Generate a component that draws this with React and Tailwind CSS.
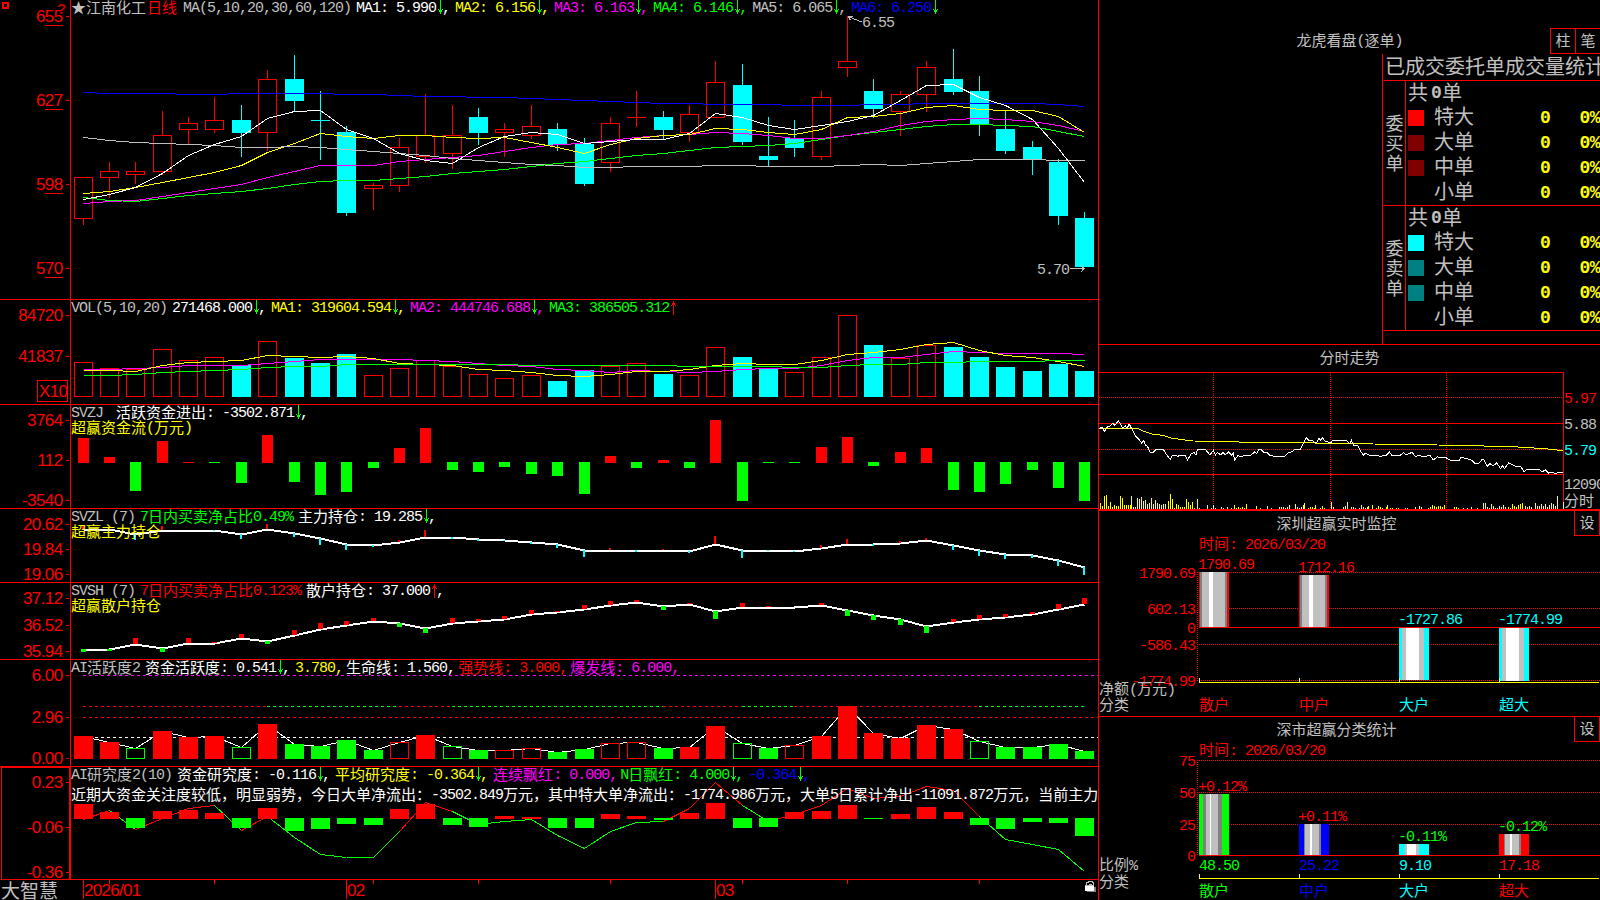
import { clsx } from "clsx";

const RED = "#ff0000";
const GREEN = "#00ff00";
const CYAN = "#00ffff";
const YELLOW = "#ffff00";
const MAGENTA = "#ff00ff";
const BLUE = "#0000ff";
const WHITE = "#ffffff";
const GRAY = "#c0c0c0";
const DIM = "#808080";

const MONO = "'Liberation Mono', 'Noto Sans CJK SC', monospace";
const SANS = "'Liberation Sans', sans-serif";
const HAN = "'Noto Sans CJK SC', sans-serif";

// Sample heights are stored in thirds of a pixel, measured from the origin of a panel group
const yAt = (origin, v) => origin + Math.floor(v / 3);
const cx = (i) => Math.floor(74.18 + 26.36 * i) + 9;

// color, wick top, body top, body bottom, wick bottom
const candles = [
  ["r", 532, 532, 656, 675], ["r", 486, 514, 532, 594], ["r", 486, 514, 523, 552],
  ["r", 333, 406, 514, 525], ["r", 351, 370, 388, 433], ["r", 291, 361, 388, 399],
  ["c", 315, 360, 399, 471], ["r", 210, 238, 397, 453], ["c", 165, 237, 303, 333],
  ["c", 273, 360, 362, 480], ["c", 378, 396, 639, 648], ["r", 549, 556, 566, 630],
  ["r", 414, 442, 556, 576], ["r", 282, 406, 469, 489], ["r", 315, 406, 460, 507],
  ["c", 324, 351, 399, 435], ["r", 369, 388, 397, 471], ["r", 315, 379, 406, 417],
  ["c", 369, 387, 435, 453], ["c", 414, 432, 552, 558], ["r", 351, 370, 487, 516],
  ["r", 273, 352, 352, 381], ["c", 333, 351, 390, 417], ["r", 315, 343, 397, 426],
  ["r", 183, 247, 352, 354], ["c", 192, 255, 426, 435], ["c", 351, 468, 480, 498],
  ["c", 360, 414, 444, 471], ["r", 273, 292, 469, 480], ["r", 50, 184, 202, 231],
  ["c", 237, 273, 327, 354], ["r", 273, 283, 334, 408], ["r", 183, 202, 283, 336],
  ["c", 147, 237, 276, 285], ["c", 228, 273, 374, 408], ["c", 333, 387, 453, 462],
  ["c", 423, 441, 478, 525], ["c", 477, 486, 648, 675], ["c", 636, 654, 801, 801],
];

const priceLines = [
  [BLUE, [277, 281, 281, 281, 283, 283, 281, 281, 281, 281, 284, 284, 287, 290, 290, 293, 293, 295, 297, 302, 304, 308, 310, 311, 314, 314, 314, 317, 317, 317, 314, 313, 311, 310, 311, 311, 311, 314, 319]],
  [GREEN, [592, 602, 604, 596, 586, 580, 574, 565, 553, 544, 541, 541, 535, 529, 520, 514, 507, 499, 491, 484, 475, 466, 460, 451, 442, 439, 436, 430, 418, 405, 397, 388, 379, 373, 374, 376, 380, 394, 408]],
  [MAGENTA, [610, 604, 601, 590, 577, 565, 552, 531, 514, 496, 496, 496, 484, 478, 472, 466, 454, 442, 434, 430, 421, 412, 406, 403, 397, 400, 406, 415, 415, 407, 394, 376, 364, 358, 355, 358, 365, 376, 394]],
  [YELLOW, [580, 573, 561, 547, 532, 517, 496, 456, 429, 401, 410, 415, 407, 406, 411, 415, 412, 428, 442, 460, 432, 414, 407, 402, 385, 388, 397, 403, 388, 352, 349, 341, 323, 316, 327, 331, 331, 350, 397]],
  [GRAY, [412, 422, 427, 430, 433, 437, 442, 442, 438, 442, 449, 455, 461, 467, 476, 481, 487, 493, 497, 502, 502, 500, 500, 499, 497, 497, 499, 499, 499, 496, 493, 496, 490, 484, 479, 479, 478, 482, 482]],
  [WHITE, [598, 584, 563, 520, 466, 433, 409, 354, 335, 331, 388, 416, 460, 482, 490, 442, 410, 398, 402, 430, 424, 418, 418, 400, 340, 352, 376, 388, 376, 364, 345, 302, 257, 253, 293, 316, 357, 446, 547]],
];

const volumes = [217, 235, 238, 178, 211, 202, 227, 154, 204, 219, 192, 256, 235, 211, 229, 253, 265, 256, 273, 242, 229, 220, 252, 256, 172, 201, 236, 247, 202, 76, 165, 205, 166, 171, 201, 231, 243, 222, 243];
const volumeCyan = [6, 8, 9, 10, 18, 19, 22, 25, 26, 30, 33, 34, 35, 36, 37, 38];

const volumeLines = [
  [MAGENTA, [238, 238, 235, 233, 227, 225, 225, 219, 213, 208, 208, 208, 208, 211, 214, 219, 225, 230, 238, 241, 247, 241, 244, 247, 244, 239, 235, 235, 226, 211, 203, 202, 193, 184, 187, 190, 190, 190, 193]],
  [YELLOW, [241, 241, 244, 226, 218, 213, 211, 196, 199, 201, 199, 205, 221, 223, 226, 237, 240, 247, 255, 259, 252, 244, 243, 239, 226, 220, 223, 223, 211, 193, 187, 179, 164, 157, 181, 196, 203, 214, 229]],
  [GREEN, [256, 256, 253, 247, 244, 240, 238, 233, 229, 228, 223, 223, 223, 223, 223, 223, 223, 226, 226, 226, 226, 226, 226, 229, 229, 229, 229, 232, 232, 226, 223, 223, 217, 217, 214, 214, 214, 211, 211]],
];

const fundFlow = [444, 501, 603, 453, 516, 519, 579, 435, 576, 615, 606, 534, 474, 414, 540, 546, 531, 552, 558, 612, 498, 534, 510, 534, 390, 633, 519, 519, 471, 441, 528, 486, 474, 600, 606, 582, 540, 594, 633];

const mainHold = [717, 717, 733, 721, 720, 720, 733, 718, 731, 745, 764, 766, 758, 741, 743, 749, 752, 758, 763, 780, 780, 780, 782, 783, 764, 780, 781, 783, 776, 763, 762, 761, 751, 766, 781, 794, 796, 811, 831];
const mainTicks = [705, 712, 750, 708, 720, 723, 747, 702, 741, 765, 780, 771, 750, 720, 749, 755, 755, 764, 774, 801, 774, 786, 777, 789, 738, 804, 784, 786, 765, 747, 768, 753, 744, 780, 798, 807, 804, 828, 855];

const retailHold = [207, 207, 193, 205, 189, 189, 176, 184, 166, 149, 136, 125, 130, 145, 130, 125, 119, 103, 98, 88, 76, 68, 79, 73, 94, 81, 81, 81, 77, 91, 106, 118, 138, 128, 118, 113, 103, 88, 74];
const retailTicks = [216, 213, 174, 216, 174, 188, 162, 192, 150, 129, 123, 114, 141, 159, 114, 117, 108, 90, 94, 75, 63, 60, 90, 69, 117, 69, 80, 81, 69, 108, 120, 135, 159, 117, 105, 102, 96, 72, 54];

// lower case letter = hollow bar
const activity = [
  ["R", 468], ["R", 486], ["g", 505], ["R", 453], ["R", 472], ["R", 468], ["g", 502], ["R", 432], ["G", 492], ["G", 498],
  ["G", 480], ["G", 510], ["r", 487], ["R", 465], ["g", 499], ["G", 510], ["r", 511], ["r", 505], ["G", 516], ["G", 507],
  ["r", 490], ["r", 487], ["G", 504], ["R", 501], ["R", 438], ["g", 490], ["G", 504], ["r", 496], ["R", 468], ["R", 378],
  ["R", 459], ["R", 474], ["R", 435], ["R", 447], ["g", 484], ["G", 501], ["G", 501], ["G", 492], ["G", 513],
];
const strengthRuns = [[0, 7, RED], [7, 12, GREEN], [12, 14, RED], [14, 22, GREEN], [22, 25, RED], [25, 27, GREEN], [27, 34, RED], [34, 38, GREEN]];

const research = [672, 696, 744, 693, 690, 699, 744, 684, 753, 747, 732, 735, 687, 672, 735, 741, 708, 711, 744, 744, 702, 708, 720, 699, 669, 744, 741, 696, 693, 675, 717, 702, 681, 696, 735, 747, 726, 729, 768];
const researchLine = [718, 691, 748, 715, 685, 676, 750, 710, 772, 823, 832, 832, 755, 667, 693, 732, 724, 718, 766, 806, 755, 728, 724, 684, 607, 676, 724, 703, 676, 625, 656, 648, 618, 632, 708, 778, 793, 808, 875];
const researchGreen = [1, 5, 7, 8, 9, 10, 11, 14, 15, 16, 17, 18, 19, 20, 21, 25, 34, 35, 36, 37];

const intradayPrice = "27,268 36,262 43,276 52,262 60,259 68,251 74,257 85,244 92,253 98,265 106,259 112,266 117,252 124,265 136,288 148,301 155,310 161,303 166,316 173,321 180,337 190,337 198,329 220,329 228,343 241,360 247,347 256,346 263,351 270,346 284,346 293,361 304,341 313,339 318,347 322,329 346,329 360,346 370,332 376,346 382,338 393,346 399,337 405,346 416,337 424,346 430,340 434,361 444,347 454,352 463,347 483,346 494,337 500,341 506,330 512,329 520,337 530,337 538,346 556,351 582,352 594,340 606,336 616,328 632,328 640,310 649,295 656,301 667,301 673,309 680,309 686,296 692,301 698,295 706,306 714,307 721,311 729,301 768,301 780,312 784,301 790,316 804,319 811,334 820,346 826,340 838,346 862,346 872,351 880,346 890,346 898,337 905,346 932,346 940,339 948,346 966,338 977,351 985,346 1000,351 1020,347 1030,361 1042,352 1066,353 1080,361 1108,361 1113,353 1122,355 1144,361 1155,371 1168,370 1176,360 1182,361 1192,380 1200,372 1210,378 1220,370 1232,387 1238,378 1243,387 1256,370 1274,379 1292,380 1302,397 1310,388 1346,388 1356,397 1366,390 1376,400 1386,398 1396,402 1408,398 1420,397";
const intradayAvg = "27,268 80,267 82,265 140,265 160,274 190,284 218,287 242,295 270,299 310,304 395,305 500,309 845,311 848,313 1035,314 1040,316 1178,317 1180,319 1254,320 1316,324 1366,327 1400,331 1420,332";
const intradayVolume = [
  [31, 19], [37, 10], [43, 40], [49, 43], [55, 10], [61, 22], [67, 7], [73, 13], [79, 10], [85, 10], [91, 40], [97, 34], [103, 13], [109, 13], [115, 13], [121, 13], [124, 40], [130, 7], [136, 7],
  [142, 34], [148, 31], [154, 37], [160, 25], [166, 28], [172, 16], [178, 19], [184, 34], [190, 16], [196, 28], [202, 19], [208, 16], [214, 13], [220, 16], [226, 16], [235, 25], [241, 46], [247, 31],
  [253, 4], [259, 16], [265, 13], [271, 7], [277, 7], [283, 7], [289, 31], [295, 22], [301, 13], [307, 22], [313, 4], [322, 31], [328, 4], [352, 13], [364, 4], [370, 13], [376, 4], [394, 7], [400, 4],
  [412, 7], [424, 4], [433, 13], [439, 4], [445, 7], [451, 4], [457, 7], [463, 4], [469, 16], [499, 10], [511, 4], [532, 10], [544, 4], [568, 7], [574, 7], [580, 7], [586, 4], [592, 7], [598, 13],
  [616, 16], [622, 7], [628, 4], [634, 7], [640, 13], [643, 19], [655, 4], [661, 7], [667, 7], [673, 4], [676, 13], [691, 4], [697, 10], [703, 4], [724, 22], [730, 7], [760, 7], [766, 10], [772, 22],
  [784, 7], [790, 7], [796, 4], [808, 4], [814, 13], [820, 7], [826, 4], [832, 7], [835, 10], [847, 13], [859, 4], [865, 10], [871, 7], [877, 4], [889, 7], [892, 13], [901, 4], [907, 4], [919, 4], [925, 4],
  [946, 4], [952, 4], [976, 7], [988, 10], [994, 7], [1015, 4], [1021, 7], [1027, 13], [1033, 10], [1039, 7], [1045, 10], [1051, 10], [1057, 7], [1063, 13], [1093, 7], [1099, 7], [1105, 4], [1120, 4],
  [1132, 4], [1144, 7], [1162, 4], [1180, 19], [1186, 19], [1192, 7], [1198, 4], [1204, 16], [1210, 10], [1216, 4], [1222, 4], [1228, 10], [1234, 7], [1240, 13], [1246, 7], [1255, 7], [1261, 4], [1267, 16],
  [1273, 10], [1279, 7], [1285, 13], [1291, 16], [1297, 19], [1306, 10], [1312, 7], [1318, 10], [1324, 7], [1336, 19], [1342, 10], [1348, 10], [1354, 16], [1360, 10], [1366, 16], [1372, 7], [1378, 13],
  [1384, 19], [1390, 16], [1396, 10], [1402, 40],
];

const isHan = (s) => /[\u2600-\uffff]/.test(s);
const splitRuns = (s) => s.match(/[\u2600-\uffff]+|[^\u2600-\uffff]+/g) ?? [];

// Han characters sit on a 15px cell, everything else on an 8px one
const Mixed = ({ children }) =>
  splitRuns(children).map((run, i) => (
    <span
      key={i}
      className={clsx(
        "whitespace-pre text-[15px] leading-4",
        isHan(run)
          ? "-mt-px mb-px font-['Noto_Sans_CJK_SC',sans-serif]"
          : "mt-px -mb-px font-['Liberation_Mono',monospace] tracking-[-1px]"
      )}
    >
      {run}
    </span>
  ));

const Label = ({ x, y, fill, anchor = "start", children }) => (
  <text x={x} y={y + 5} fill={fill} textAnchor={anchor} fontSize="15" xmlSpace="preserve">
    {splitRuns(children).map((run, i) => (
      <tspan key={i} fontFamily={isHan(run) ? HAN : MONO} letterSpacing={isHan(run) ? 0 : -1}>
        {run}
      </tspan>
    ))}
  </text>
);

const Arrow = ({ up }) => (
  <svg className="block h-4 w-2 shrink-0" viewBox="0 0 8 16" shapeRendering="crispEdges">
    {up ? (
      <path d="M4 1h1v14h-1zM3 3h3v2h-3zM2 5h1v1h-1zM6 5h1v1h-1z" fill={RED} />
    ) : (
      <path d="M4 0h1v14h-1zM3 10h3v2h-3zM2 9h1v1h-1zM6 9h1v1h-1z" fill={GREEN} />
    )}
  </svg>
);

const Legend = ({ items, note }) => (
  <div className="absolute top-0 left-[71px]">
    <div className="flex h-4 items-center gap-[3px] leading-4 whitespace-nowrap">
      {items.map(([color, text, dir], i) => (
        <div
          key={i}
          className={clsx("flex items-center", !dir && !text.endsWith(",") && "pr-0.5", color)}
        >
          <Mixed>{text}</Mixed>
          {dir && <Arrow up={dir === "up"} />}
          {dir && (
            <span className="mt-px -mb-px -ml-0.5 w-2.5 font-['Liberation_Mono',monospace] text-[15px] leading-4">
              {dir === "end" ? "" : ","}
            </span>
          )}
        </div>
      ))}
    </div>
    {note}
  </div>
);

const SubTitle = ({ children }) => (
  <div className="-mt-px flex h-4 items-center leading-4 whitespace-nowrap text-[#ffff00]">
    <Mixed>{children}</Mixed>
  </div>
);

const Line = ({ values, origin, color, width = 1 }) => (
  <polyline
    points={values.map((v, i) => `${cx(i) + 0.5},${yAt(origin, v) + 0.5}`).join(" ")}
    fill="none"
    stroke={color}
    strokeWidth={width}
  />
);

const Bar = ({ i, top, bottom, color, hollow, width = 19 }) => {
  const x = cx(i) - Math.floor(width / 2);
  return hollow ? (
    <rect x={x + 0.5} y={top + 0.5} width={width - 1} height={Math.max(bottom - top - 1, 0.01)} fill="none" stroke={color} />
  ) : (
    <rect x={x} y={top} width={width} height={Math.max(bottom - top, 1)} fill={color} />
  );
};

const Axis = ({ top, bottom, ticks, underline }) => (
  <g>
    <rect x={70} y={top} width={1} height={bottom - top} fill={RED} />
    {ticks.map(([label, y]) => (
      <g key={label}>
        <rect x={66} y={y} width={3} height={1} fill={RED} />
        <text x={62.5} y={y + 6} textAnchor="end" fill={RED} fontFamily={SANS} fontSize="17" letterSpacing="-0.6">
          {label}
        </text>
        {underline && <rect x={45} y={y + 9} width={18} height={1} fill={RED} />}
      </g>
    ))}
  </g>
);

const Panel = ({ className, top, height, children, legend }) => (
  <section className={clsx("relative shrink-0 border-[#ff0000]", className)}>
    <svg className="block" width="1098" height={height} viewBox={`0 ${top} 1098 ${height}`} shapeRendering="crispEdges">
      {children}
    </svg>
    {legend}
  </section>
);

const PricePanel = () => (
  <Panel
    className="h-[299px]"
    top={0}
    height={299}
    legend={
      <Legend
        items={[
          ["text-[#c0c0c0] w-3", "★"],
          ["text-[#c0c0c0] -mr-1", "江南化工"],
          ["text-[#ff0000] pr-[3px]", "日线"],
          ["text-[#c0c0c0]", "MA(5,10,20,30,60,120)"],
          ["text-white", "MA1: 5.990", "down"],
          ["text-[#ffff00]", "MA2: 6.156", "down"],
          ["text-[#ff00ff]", "MA3: 6.163", "down"],
          ["text-[#00ff00]", "MA4: 6.146", "down"],
          ["text-[#c0c0c0]", "MA5: 6.065", "down"],
          ["text-[#0000ff]", "MA6: 6.250", "end"],
        ]}
      />
    }
  >
    <Axis top={0} bottom={299} underline ticks={[["655", 16], ["627", 100], ["598", 184], ["570", 268]]} />
    <rect x={3} y={3} width={5} height={5} fill="none" stroke={RED} strokeWidth={2} />
    <text x={57} y={14} fill="#c00000" fontFamily={SANS} fontWeight="bold" fontSize="15">?</text>
    {candles.map(([kind, high, top, bottom, low], i) => {
      const color = kind === "r" ? RED : CYAN;
      const [h, t, b, l] = [high, top, bottom, low].map((v) => yAt(0, v));
      return (
        <g key={i} fill={color}>
          <rect x={cx(i)} y={h} width={1} height={t - h} />
          <rect x={cx(i)} y={b} width={1} height={Math.max(l - b, 0)} />
          {kind === "r" && b > t ? (
            <Bar i={i} top={t} bottom={b + 1} color={color} hollow />
          ) : (
            <Bar i={i} top={t} bottom={b} color={color} />
          )}
        </g>
      );
    })}
    {priceLines.map(([color, values]) => (
      <Line key={color} values={values} origin={0} color={color} />
    ))}
    <path d="M862 22l-13-5M848.500 16.500h4M848.500 16.500l2 4" stroke={GRAY} fill="none" />
    <Label x={862} y={22} fill={GRAY}>6.55</Label>
    <path d="M1070 268.500h14M1080 265l4 3.500l-3 3.500" stroke={GRAY} fill="none" />
    <Label x={1037} y={269} fill={GRAY}>5.70</Label>
  </Panel>
);

const VolumePanel = () => (
  <Panel
    className="h-[105px] border-t"
    top={300}
    height={104}
    legend={
      <Legend
        items={[
          ["text-[#c0c0c0]", "VOL(5,10,20)"],
          ["text-white", "271468.000", "down"],
          ["text-[#ffff00]", "MA1: 319604.594", "down"],
          ["text-[#ff00ff]", "MA2: 444746.688", "down"],
          ["text-[#00ff00] [&>span:last-child]:invisible", "MA3: 386505.312", "up"],
        ]}
      />
    }
  >
    <Axis top={300} bottom={404} ticks={[["84720", 315], ["41837", 356]]} />
    <rect x={37.5} y={380.5} width={30} height={21} fill="none" stroke={RED} />
    <text x={39} y={397} fill={RED} fontFamily={SANS} fontSize="17" letterSpacing="-0.6">X10</text>
    {volumes.map((v, i) => {
      const cyan = volumeCyan.includes(i);
      return <Bar key={i} i={i} top={yAt(290, v)} bottom={397} color={cyan ? CYAN : RED} hollow={!cyan} />;
    })}
    {volumeLines.map(([color, values]) => (
      <Line key={color} values={values} origin={290} color={color} />
    ))}
  </Panel>
);

const FlowPanel = () => (
  <Panel
    className="h-[104px] border-t"
    top={405}
    height={103}
    legend={
      <Legend
        items={[
          ["text-[#c0c0c0]", "SVZJ "],
          ["text-white", "活跃资金进出: -3502.871", "down"],
        ]}
        note={<SubTitle>超赢资金流(万元)</SubTitle>}
      />
    }
  >
    <Axis top={405} bottom={508} ticks={[["3764", 420], ["112", 460], ["-3540", 500]]} />
    {fundFlow.map((v, i) =>
      v <= 516 ? (
        <Bar key={i} i={i} top={yAt(290, v)} bottom={463} color={RED} width={11} />
      ) : (
        <Bar key={i} i={i} top={462} bottom={yAt(290, v)} color={GREEN} width={11} />
      )
    )}
  </Panel>
);

const HoldPanel = ({ className, top, height, origin, ticks, line, marks, markWidth, downColor, legend }) => (
  <Panel className={className} top={top} height={height} legend={legend}>
    <Axis top={top} bottom={top + height} ticks={ticks} />
    <Line values={line} origin={origin} color={WHITE} width={2} />
    {marks.map((v, i) => {
      const a = yAt(origin, v);
      const b = yAt(origin, line[i]);
      return (
        <rect
          key={i}
          x={cx(i) - Math.floor(markWidth / 2)}
          y={Math.min(a, b)}
          width={markWidth}
          height={Math.abs(a - b)}
          fill={a < b ? RED : downColor}
        />
      );
    })}
  </Panel>
);

const ActivityPanel = () => (
  <Panel
    className="h-[107px] border-t"
    top={660}
    height={106}
    legend={
      <Legend
        items={[
          ["text-[#c0c0c0]", "AI活跃度2"],
          ["text-white", "资金活跃度: 0.541", "down"],
          ["text-[#ffff00]", "3.780,"],
          ["text-white", "生命线: 1.560,"],
          ["text-[#ff0000]", "强势线: 3.000,"],
          ["text-[#ff00ff]", "爆发线: 6.000,"],
        ]}
      />
    }
  >
    <Axis top={660} bottom={766} ticks={[["6.00", 675], ["2.96", 717], ["0.00", 758]]} />
    <g strokeDasharray="3 3">
      <path d="M83 675.500H1098" stroke={MAGENTA} />
      {strengthRuns.map(([from, to, color]) => (
        <path key={from} d={`M${cx(from)} 706.500H${cx(to)}`} stroke={color} />
      ))}
      <path d="M83 717.500H1098" stroke={RED} />
      <path d="M83 737.500H1098" stroke={WHITE} />
    </g>
    <Line values={activity.map(([, v]) => v)} origin={580} color={WHITE} />
    {activity.map(([kind, v], i) => (
      <Bar
        key={i}
        i={i}
        top={yAt(580, v)}
        bottom={759}
        color={kind.toLowerCase() === "r" ? RED : GREEN}
        hollow={kind === kind.toLowerCase()}
      />
    ))}
  </Panel>
);

const ResearchPanel = () => (
  <Panel
    className="h-[114px] border-t"
    top={767}
    height={113}
    legend={
      <Legend
        items={[
          ["text-[#c0c0c0]", "AI研究度2(10)"],
          ["text-white", "资金研究度: -0.116", "down"],
          ["text-[#ffff00]", "平均研究度: -0.364", "down"],
          ["text-[#ff00ff]", "连续飘红: 0.000,"],
          ["text-[#00ff00]", "N日飘红: 4.000", "down"],
          ["text-[#0000ff]", "-0.364", "down"],
        ]}
        note={
          <div className="mt-1 flex h-4 items-center leading-4 whitespace-nowrap text-white">
            <Mixed>
              近期大资金关注度较低，明显弱势，今日大单净流出：-3502.849万元，其中特大单净流出：-1774.986万元，大单5日累计净出-11091.872万元，当前主力
            </Mixed>
          </div>
        }
      />
    }
  >
    <Axis top={767} bottom={880} ticks={[["0.23", 782], ["-0.06", 827], ["-0.36", 872]]} />
    <rect x={1.5} y={767.5} width={68} height={112} fill="none" stroke={RED} />
    {researchLine.slice(1).map((v, i) => (
      <line
        key={i}
        x1={cx(i) + 0.5}
        y1={yAt(580, researchLine[i]) + 0.5}
        x2={cx(i + 1) + 0.5}
        y2={yAt(580, v) + 0.5}
        stroke={researchGreen.includes(i) ? GREEN : RED}
      />
    ))}
    {research.map((v, i) =>
      v < 714 ? (
        <Bar key={i} i={i} top={yAt(580, v)} bottom={819} color={RED} />
      ) : (
        <Bar key={i} i={i} top={818} bottom={yAt(580, v)} color={GREEN} />
      )
    )}
  </Panel>
);

const DateBar = () => (
  <footer className="flex h-[19px] items-center">
    <div className="w-[70px] shrink-0 pl-px font-['Noto_Sans_CJK_SC',sans-serif] text-[19px] leading-[17px] text-[#c0c0c0]">
      大智慧
    </div>
    <svg className="block overflow-visible" width="1028" height="19" viewBox="70 881 1028 19" shapeRendering="crispEdges">
      <rect x={70} y={880} width={1028} height={1} fill={RED} />
      {[["2026/01", 83], ["02", 346], ["03", 715]].map(([label, x]) => (
        <g key={label} fill={RED}>
          <rect x={x} y={881} width={1} height={19} />
          <text x={x + 1} y={897} fontFamily={SANS} fontSize="17" letterSpacing="-0.7">{label}</text>
        </g>
      ))}
      {[109, 214, 373, 478, 610, 742, 847, 979].map((x) => (
        <rect key={x} x={x} y={881} width={1} height={4} fill={RED} />
      ))}
      <path d="M1086.500 886v-2.500h1.500v-1h4v1h1.500v2.500M1088.500 885.500h3" fill="none" stroke={GRAY} />
      <rect x={1087} y={888} width={9} height={5} fill={DIM} />
      <rect x={1085} y={886} width={9} height={6} fill={WHITE} />
      <rect x={1085} y={886} width={9} height={1} fill={GRAY} />
    </svg>
  </footer>
);

const OrderBlock = ({ title, colors }) => (
  <div className="ml-px flex h-[125px] border-t border-[#ff0000]">
    <div className="flex w-[22px] shrink-0 flex-col items-center justify-center border-r border-[#ff0000] pb-[3px] font-['Noto_Sans_CJK_SC',sans-serif] text-[18px] leading-5">
      {title.split("").map((c) => (
        <span key={c}>{c}</span>
      ))}
    </div>
    <div className="flex flex-1 flex-col font-['Noto_Sans_CJK_SC',sans-serif] text-[20px] leading-6">
      <div className="flex h-6 items-center pl-0.5">
        <span className="-mt-[3px]">共</span>
        <b className="mr-px ml-[3px] font-['Liberation_Mono',monospace] text-[18px] tracking-[-0.8px]">0</b>
        <span className="-mt-[3px]">单</span>
      </div>
      {["特大", "大单", "中单", "小单"].map((name, i) => (
        <div key={name} className="flex h-[25px] items-center pl-0.5">
          <span className={clsx("size-4", colors[i])} />
          <span className="-mt-[3px] ml-2.5 w-[53px]">{name}</span>
          <b className="w-[63px] text-right font-['Liberation_Mono',monospace] text-[18px] tracking-[-0.8px] text-[#ffff00]">0</b>
          <b className="flex-1 text-right font-['Liberation_Mono',monospace] text-[18px] tracking-[-0.5px] text-[#ffff00]">0%</b>
        </div>
      ))}
    </div>
  </div>
);

const OrderPanel = () => (
  <section className="flex h-[345px] shrink-0 flex-col border-b border-[#ff0000] text-[#c0c0c0]">
    <div className="flex h-[54px] items-end">
      <h2 className="flex h-[26px] flex-1 items-center justify-center pl-[50px]">
        <Mixed>龙虎看盘(逐单)</Mixed>
      </h2>
      <div className="flex h-[26px] w-[26px] items-center justify-center border border-[#ff0000]">
        <Mixed>柱</Mixed>
      </div>
      <div className="flex h-[26px] w-6 items-center justify-center border-y border-[#ff0000]">
        <Mixed>笔</Mixed>
      </div>
    </div>
    <div className="ml-[283px] flex-1 overflow-hidden border-l border-[#ff0000]">
      <div className="h-[26px] pl-0.5 font-['Noto_Sans_CJK_SC',sans-serif] text-[20px] leading-6 whitespace-nowrap">
        已成交委托单成交量统计
      </div>
      <OrderBlock title="委买单" colors={["bg-[#ff0000]", "bg-[#800000]", "bg-[#800000]"]} />
      <OrderBlock title="委卖单" colors={["bg-[#00ffff]", "bg-[#008080]", "bg-[#008080]"]} />
      <div className="ml-px border-t border-[#ff0000]" />
    </div>
  </section>
);

const IntradayPanel = () => (
  <section className="h-[164px] shrink-0 text-[#c0c0c0]">
    <h2 className="flex h-[27px] items-center justify-center pb-px">
      <Mixed>分时走势</Mixed>
    </h2>
    <svg className="block" width="501" height="137" viewBox="1099 372 501 137" shapeRendering="crispEdges">
      <g fill={RED}>
        <rect x={1099} y={372} width={465} height={1} />
        <rect x={1099} y={423} width={465} height={1} />
        <rect x={1099} y={474} width={465} height={1} />
        <rect x={1563} y={372} width={1} height={137} />
      </g>
      <g stroke={RED} strokeDasharray="1 1">
        <path d="M1099 397.500H1563M1099 449.500H1563M1213.500 373V509M1330.500 373V509M1446.500 373V509" />
      </g>
      {intradayVolume.map(([x, h]) => (
        <rect key={x} x={1090 + Math.floor(x / 3)} y={509 - Math.round(h / 3)} width={1} height={Math.round(h / 3)} fill={YELLOW} />
      ))}
      <rect x={1563} y={502} width={1} height={7} fill={YELLOW} />
      <svg x={1099} y={372} width={465} height={137} viewBox="27 97 1395 411" fill="none" strokeWidth="3">
        <polyline points={intradayAvg} stroke={YELLOW} />
        <polyline points={intradayPrice} stroke={WHITE} />
      </svg>
      <Label x={1564} y={398} fill={RED}>5.97</Label>
      <Label x={1564} y={424} fill={GRAY}>5.88</Label>
      <Label x={1564} y={450} fill={CYAN}>5.79</Label>
      <Label x={1564} y={484} fill={GRAY}>12090</Label>
      <Label x={1564} y={501} fill={GRAY}>分时</Label>
    </svg>
  </section>
);

// Striped column: [color, width] from left to right
const Cylinder = ({ x, y, height, stripes }) => {
  let offset = x;
  return stripes.map(([color, width], i) => {
    const left = offset;
    offset += width;
    return <rect key={i} x={left} y={y} width={width} height={height} fill={color} />;
  });
};

const redTube = [[RED, 1], [DIM, 2], [GRAY, 7], [WHITE, 4], [GRAY, 12], [DIM, 2], [RED, 2]];
const cyanTube = [[CYAN, 3], [GRAY, 4], [WHITE, 13], [GRAY, 5], [CYAN, 5]];
const sideTube = (c) => [[c, 5], [DIM, 1], [GRAY, 5], [WHITE, 2], [GRAY, 7], [DIM, 2], [c, 8]];

const monitor = [
  { name: "散户", value: "1790.69", x: 1199, y: 572, h: 55, labelY: 564, color: RED, stripes: redTube },
  { name: "中户", value: "1712.16", x: 1299, y: 575, h: 52, labelY: 567, color: RED, stripes: redTube },
  { name: "大户", value: "-1727.86", x: 1399, y: 628, h: 52, labelY: 619, color: CYAN, stripes: cyanTube },
  { name: "超大", value: "-1774.99", x: 1499, y: 628, h: 53, labelY: 619, color: CYAN, stripes: cyanTube },
];

const shares = [
  { name: "散户", value: "48.50", delta: "+0.12%", x: 1199, y: 794, labelY: 786, color: GREEN, stripes: [[GREEN, 4], [DIM, 3], [GRAY, 4], [WHITE, 1], [GRAY, 7], [DIM, 4], [GREEN, 7]] },
  { name: "中户", value: "25.22", delta: "+0.11%", x: 1299, y: 824, labelY: 816, color: BLUE, stripes: sideTube(BLUE) },
  { name: "大户", value: "9.10", delta: "-0.11%", x: 1399, y: 844, labelY: 836, color: CYAN, stripes: [[CYAN, 6], [GRAY, 2], [WHITE, 9], [GRAY, 3], [CYAN, 10]] },
  { name: "超大", value: "17.18", delta: "-0.12%", x: 1499, y: 834, labelY: 826, color: RED, stripes: sideTube(RED) },
];

const StatPanel = ({ className, title, top, height, children }) => (
  <section className={clsx("relative shrink-0 border-[#ff0000] text-[#c0c0c0]", className)}>
    <svg className="block" width="501" height={height} viewBox={`1099 ${top} 501 ${height}`} shapeRendering="crispEdges">
      {children}
    </svg>
    <div className="absolute inset-x-0 top-0 flex">
      <h2 className="flex h-[26px] flex-1 items-center justify-center">
        <Mixed>{title}</Mixed>
      </h2>
      <div className="flex h-[25px] w-[26px] items-center justify-center border-x border-b border-[#ff0000]">
        <Mixed>设</Mixed>
      </div>
    </div>
  </section>
);

const MonitorPanel = () => (
  <StatPanel className="h-[207px] border-t-2" title="深圳超赢实时监控" top={511} height={205}>
    <Label x={1199} y={544} fill={RED}>时间: 2026/03/20</Label>
    <path
      d="M1199 572.500H1600M1199 608.500H1600M1199 644.500H1600M1199 680.500H1600M1197.500 572V681"
      stroke={RED}
      strokeDasharray="1 1"
    />
    {[["1790.69", 573], ["602.13", 609], ["0", 628], ["-586.43", 645], ["-1774.99", 681]].map(([label, y]) => (
      <Label key={label} x={1195} y={y} fill={RED} anchor="end">{label}</Label>
    ))}
    <rect x={1199} y={627} width={401} height={1} fill={RED} />
    {monitor.map((m) => (
      <g key={m.name}>
        <Cylinder x={m.x} y={m.y} height={m.h} stripes={m.stripes} />
        <Label x={m.x - 1} y={m.labelY} fill={m.color}>{m.value}</Label>
        <rect x={m.x} y={678} width={1} height={4} fill={YELLOW} />
        <Label x={m.x} y={705} fill={m.color}>{m.name}</Label>
      </g>
    ))}
    <rect x={1199} y={682} width={400} height={1} fill={YELLOW} />
    <Label x={1099} y={689} fill={GRAY}>净额(万元)</Label>
    <Label x={1099} y={705} fill={GRAY}>分类</Label>
  </StatPanel>
);

const SharePanel = () => (
  <StatPanel className="h-[184px] border-t" title="深市超赢分类统计" top={717} height={183}>
    <Label x={1199} y={750} fill={RED}>时间: 2026/03/20</Label>
    <path d="M1199 760.500H1600M1199 792.500H1600M1199 824.500H1600M1197.500 760V855" stroke={RED} strokeDasharray="1 1" />
    {[["75", 761], ["50", 793], ["25", 825], ["0", 856]].map(([label, y]) => (
      <Label key={label} x={1195} y={y} fill={RED} anchor="end">{label}</Label>
    ))}
    <rect x={1199} y={855} width={401} height={1} fill={RED} />
    {shares.map((s) => (
      <g key={s.name}>
        <Cylinder x={s.x} y={s.y} height={855 - s.y} stripes={s.stripes} />
        <Label x={s.x - 1} y={s.labelY} fill={s.delta.startsWith("+") ? RED : GREEN}>{s.delta}</Label>
        <Label x={s.x} y={865} fill={s.color}>{s.value}</Label>
        <rect x={s.x} y={874} width={1} height={4} fill={YELLOW} />
        <Label x={s.x} y={891} fill={s.color}>{s.name}</Label>
      </g>
    ))}
    <rect x={1199} y={878} width={400} height={1} fill={YELLOW} />
    <Label x={1099} y={865} fill={GRAY}>比例%</Label>
    <Label x={1099} y={882} fill={GRAY}>分类</Label>
  </StatPanel>
);

const App = () => (
  <main className="flex h-[900px] w-[1600px] overflow-hidden bg-black">
    <div className="flex w-[1099px] shrink-0 flex-col border-r border-[#ff0000]">
      <PricePanel />
      <VolumePanel />
      <FlowPanel />
      <HoldPanel
        className="h-[74px] border-t"
        top={509}
        height={73}
        origin={290}
        ticks={[["20.62", 524], ["19.84", 549], ["19.06", 574]]}
        line={mainHold}
        marks={mainTicks}
        markWidth={2}
        downColor={CYAN}
        legend={
          <Legend
            items={[
              ["text-[#c0c0c0]", "SVZL (7)"],
              ["text-[#00ff00]", "7日内买卖净占比0.49%"],
              ["text-white", "主力持仓: 19.285", "down"],
            ]}
            note={<SubTitle>超赢主力持仓</SubTitle>}
          />
        }
      />
      <HoldPanel
        className="h-[77px] border-t"
        top={583}
        height={76}
        origin={580}
        ticks={[["37.12", 598], ["36.52", 625], ["35.94", 651]]}
        line={retailHold}
        marks={retailTicks}
        markWidth={5}
        downColor={GREEN}
        legend={
          <Legend
            items={[
              ["text-[#c0c0c0]", "SVSH (7)"],
              ["text-[#ff0000]", "7日内买卖净占比0.123%"],
              ["text-white", "散户持仓: 37.000", "up"],
            ]}
            note={<SubTitle>超赢散户持仓</SubTitle>}
          />
        }
      />
      <ActivityPanel />
      <ResearchPanel />
      <DateBar />
    </div>
    <div className="flex w-[501px] flex-col">
      <OrderPanel />
      <IntradayPanel />
      <MonitorPanel />
      <SharePanel />
    </div>
  </main>
);

export default App;
